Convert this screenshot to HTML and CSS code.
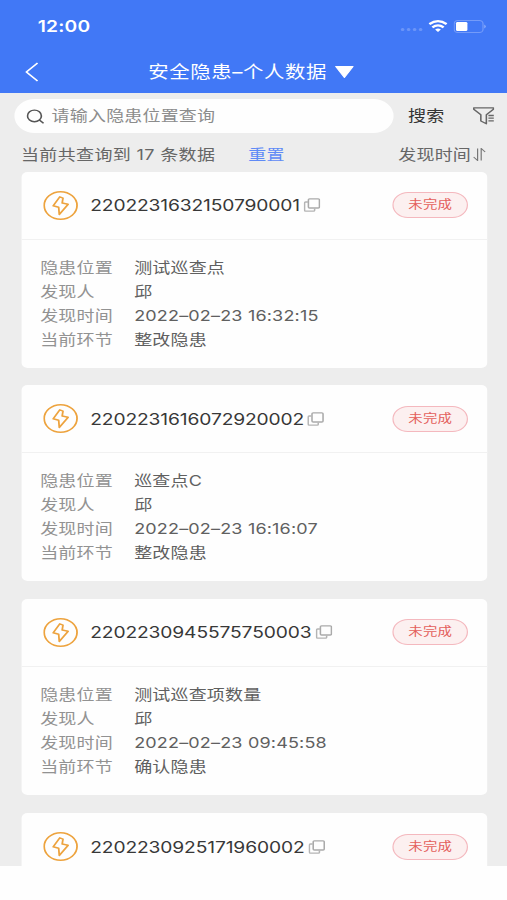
FILE: index.html
```
<!DOCTYPE html>
<html lang="zh-CN">
<head>
<meta charset="utf-8">
<title>安全隐患</title>
<link rel="stylesheet" href="styles.css">
</head>
<body>
<svg width="0" height="0" class="defs">
  <symbol id="bolt" viewBox="0 0 29 29"><circle cx="14.5" cy="14.5" r="13.7" fill="none" stroke="#eda33e" stroke-width="1.5"/><path d="M13.8 5.8 8.3 14.8l4.6 1.5.5 7.2 7.4-10.2-5-1.2.7-4.9Z" fill="none" stroke="#eda33e" stroke-width="1.5" stroke-linejoin="round"/></symbol>
  <symbol id="copy" viewBox="0 0 14 14"><rect x="4" y=".8" width="9.2" height="9.2" rx="1" fill="none" stroke="#aaa" stroke-width="1.3"/><path d="M3.6 4H1.7q-.9 0-.9.9v7.3q0 .9.9.9h6.6q.9 0 .9-.9v-1.8" fill="none" stroke="#b4b4b4" stroke-width="1.3"/></symbol>
</svg>
<div class="screen">
  <header class="header">
    <div class="status">
      <span class="clock">12:00</span>
      <span class="signal"><i></i><i></i><i></i><i></i></span>
      <svg class="wifi" viewBox="0 0 16 12"><g fill="none" stroke="#fff" stroke-width="2.2"><path d="M.8 4.2q7.2-6 14.4 0"/><path d="M3.3 7.3q4.7-3.8 9.4 0"/></g><path d="M5.6 9.4q2.4-1.8 4.8 0L8 12Z" fill="#fff"/></svg>
      <svg class="battery" viewBox="0 0 27 13"><rect x=".5" y=".5" width="24" height="12" rx="3" fill="none" stroke="#749bf9"/><rect x="2" y="2" width="9.5" height="9" rx="1.3" fill="#fff"/><path d="M25.5 4.5q1.4.8 1.4 2t-1.4 2Z" fill="#86a9fa"/></svg>
    </div>
    <div class="nav">
      <svg class="back" viewBox="0 0 11 20"><path d="M10.3 1 1 10l9.3 9" fill="none" stroke="#fff" stroke-width="1.5"/></svg>
      <span class="title">安全隐患–个人数据</span>
      <svg class="caret" viewBox="0 0 16 12"><path d="M.8.5h14.4L8 11.5Z" fill="#fff" stroke="#fff" stroke-linejoin="round"/></svg>
    </div>
  </header>
  <main class="content">
    <div class="search-row">
      <div class="search"><svg class="lens" viewBox="0 0 15 15"><g fill="none" stroke="#555" stroke-width="1.4"><circle cx="6.7" cy="6.9" r="5.8"/><path d="m10.8 11 3.5 3.3"/></g></svg><span>请输入隐患位置查询</span></div>
      <span class="search-btn">搜索</span>
      <svg class="filter" viewBox="0 0 18 18"><g fill="none" stroke="#666" stroke-width="1.3" stroke-linejoin="round"><path d="M.8.8h16.4v1.5L11.3 7.8v9L6.7 14V7.8L.8 2.3Z"/><path d="M13 8.5h4.5M13 11.2h4.5M13 13.9h4.5"/></g></svg>
    </div>
    <div class="summary">
      <span class="count">当前共查询到 17 条数据</span><span class="reset">重置</span>
      <span class="sort">发现时间</span><svg class="sort-icon" viewBox="0 0 11 13"><path d="M4 .5v12L.7 9M7 12.5V.5L10.3 4" fill="none" stroke="#777"/></svg>
    </div>
    <div class="list">
      <section class="card">
        <div class="card-head"><svg class="bolt"><use href="#bolt"/></svg><span class="code">2202231632150790001</span><svg class="copy"><use href="#copy"/></svg><span class="badge">未完成</span></div>
        <dl class="info"><dt>隐患位置</dt><dd>测试巡查点</dd><dt>发现人</dt><dd>邱</dd><dt>发现时间</dt><dd class="date">2022–02–23 16:32:15</dd><dt>当前环节</dt><dd>整改隐患</dd></dl>
      </section>
      <section class="card">
        <div class="card-head"><svg class="bolt"><use href="#bolt"/></svg><span class="code">2202231616072920002</span><svg class="copy"><use href="#copy"/></svg><span class="badge">未完成</span></div>
        <dl class="info"><dt>隐患位置</dt><dd>巡查点C</dd><dt>发现人</dt><dd>邱</dd><dt>发现时间</dt><dd class="date">2022–02–23 16:16:07</dd><dt>当前环节</dt><dd>整改隐患</dd></dl>
      </section>
      <section class="card">
        <div class="card-head"><svg class="bolt"><use href="#bolt"/></svg><span class="code">2202230945575750003</span><svg class="copy"><use href="#copy"/></svg><span class="badge">未完成</span></div>
        <dl class="info"><dt>隐患位置</dt><dd>测试巡查项数量</dd><dt>发现人</dt><dd>邱</dd><dt>发现时间</dt><dd class="date">2022–02–23 09:45:58</dd><dt>当前环节</dt><dd>确认隐患</dd></dl>
      </section>
      <section class="card card-cut">
        <div class="card-head"><svg class="bolt"><use href="#bolt"/></svg><span class="code">2202230925171960002</span><svg class="copy"><use href="#copy"/></svg><span class="badge">未完成</span></div>
      </section>
    </div>
  </main>
</div>
</body>
</html>
```

FILE: styles.css
```
* { box-sizing: border-box; }
html, body { margin: 0; height: 900px; overflow: hidden; background: #fefefe; }
.defs { position: absolute; }
svg { flex: none; display: block; }
.screen {
  width: 422.5px; height: 900px; overflow: hidden;
  transform: scaleX(1.2); transform-origin: 0 0;
  font: 15px/24px Inter, "Noto Sans CJK SC", sans-serif; color: #666;
  letter-spacing: .15px; white-space: nowrap;
}
.header { height: 93px; background: #4178f6; color: #fff; }
.status { display: flex; align-items: center; height: 52px; padding: 0 17.5px 0 31.5px; }
.clock { font-size: 16px; font-weight: 600; }
.signal { display: flex; gap: 2px; margin: 7px 5px 0 auto; }
.signal i { width: 3px; height: 3.5px; border-radius: 50%; background: #6b95f8; }
.wifi { width: 16px; height: 12px; margin-right: 5px; }
.battery { width: 27px; height: 13px; }
.nav { display: flex; align-items: center; height: 39px; padding-left: 21px; }
.back { width: 11px; height: 20px; }
.title { margin-left: 91.5px; font-size: 17px; letter-spacing: .5px; }
.caret { width: 16px; height: 12px; margin-left: 6px; }
.content { height: 773px; overflow: hidden; background: #ededed; padding-top: 6px; }
.search-row { display: flex; align-items: center; height: 34px; padding-left: 12px; }
.search { display: flex; align-items: center; gap: 6.5px; width: 315.5px; height: 34px; padding-left: 9.5px; border-radius: 17px; background: #fefefe; color: #8c8c8c; }
.lens { width: 15px; height: 15px; }
.search-btn { margin-left: 12.5px; color: #333; }
.filter { width: 18px; height: 18px; margin-left: 23.5px; }
.summary { display: flex; align-items: center; height: 38.5px; padding: 5px 18px 0 17.5px; }
.count { letter-spacing: .3px; }
.reset { margin-left: 27.5px; color: #5f8af6; }
.sort { margin-left: auto; }
.sort-icon { width: 11px; height: 13px; margin-left: 1px; }
.list { display: flex; flex-direction: column; gap: 17.5px; padding: 0 17px 0 17.8px; }
.card { flex: none; height: 196.2px; border-radius: 5px; background: #fefefe; }
.card-cut { height: 80px; }
.card-head { display: flex; align-items: center; height: 68px; padding: 0 15.5px 0 18px; border-bottom: 1px solid #f1f1f1; }
.card-cut .card-head { border: 0; }
.bolt { width: 29px; height: 29px; }
.code { margin-left: 10.4px; font-size: 16px; letter-spacing: -.1px; color: #383838; }
.copy { width: 14px; height: 14px; margin-left: 3px; }
.badge { display: flex; align-items: center; justify-content: center; width: 63px; height: 26px; margin-left: auto; border: 1px solid #f4b8be; border-radius: 13px; background: #fcf0f0; color: #e4605c; font-size: 12px; }
.info { display: grid; grid-template-columns: 78.3px 1fr; margin: 0; padding: 16.3px 0 0 15.7px; }
.info dt { color: #929292; }
.info dd { margin: 0; color: #606060; }
```
